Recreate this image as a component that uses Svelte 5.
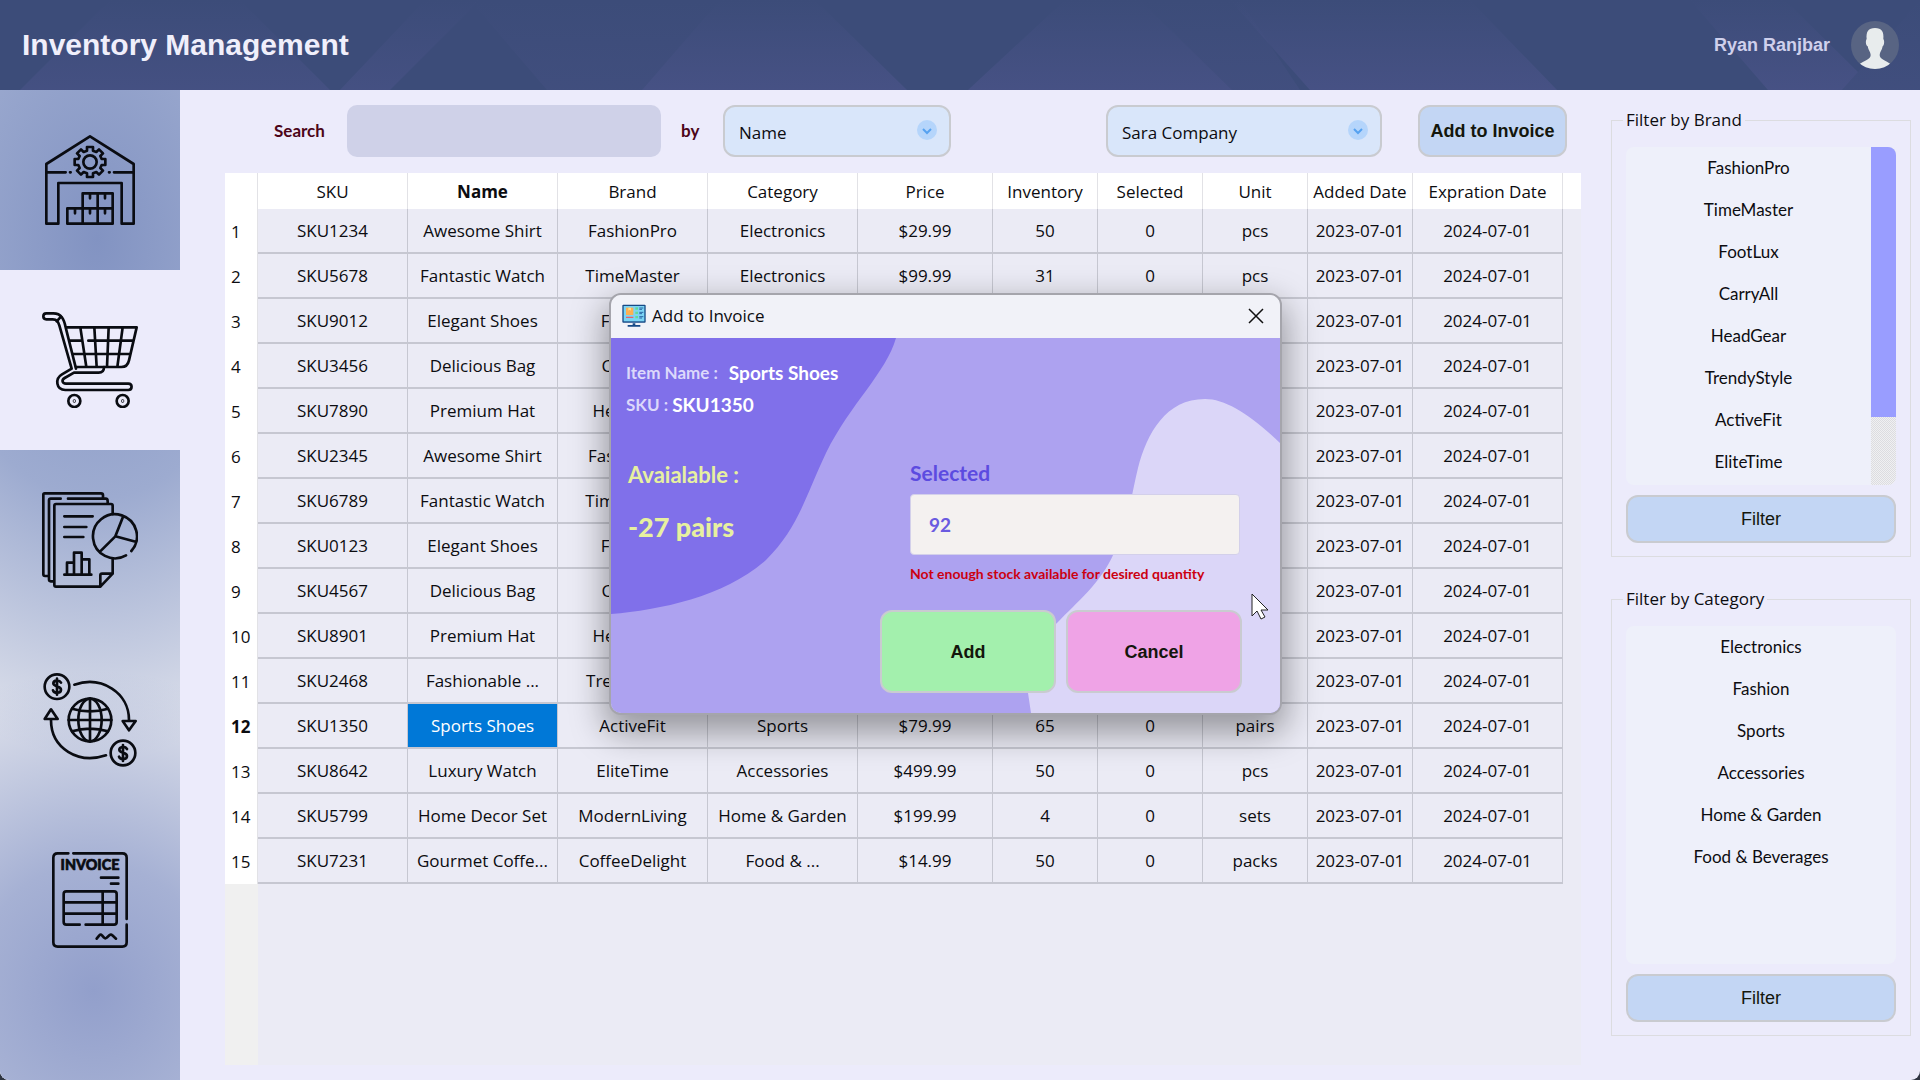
<script>
  const columns = [
    { name: 'SKU', width: 150 },
    { name: 'Name', width: 150 },
    { name: 'Brand', width: 150 },
    { name: 'Category', width: 150 },
    { name: 'Price', width: 135 },
    { name: 'Inventory', width: 105 },
    { name: 'Selected', width: 105 },
    { name: 'Unit', width: 105 },
    { name: 'Added Date', width: 105 },
    { name: 'Expration Date', width: 150 }
  ];

  const items = [
    ['SKU1234', 'Awesome Shirt', 'FashionPro', 'Electronics', '$29.99', '50', 'pcs'],
    ['SKU5678', 'Fantastic Watch', 'TimeMaster', 'Electronics', '$99.99', '31', 'pcs'],
    ['SKU9012', 'Elegant Shoes', 'FootLux', 'Fashion', '$49.99', '50', 'pairs'],
    ['SKU3456', 'Delicious Bag', 'CarryAll', 'Fashion', '$39.99', '50', 'pcs'],
    ['SKU7890', 'Premium Hat', 'HeadGear', 'Fashion', '$19.99', '50', 'pcs'],
    ['SKU2345', 'Awesome Shirt', 'FashionPro', 'Fashion', '$29.99', '50', 'pcs'],
    ['SKU6789', 'Fantastic Watch', 'TimeMaster', 'Electronics', '$99.99', '50', 'pcs'],
    ['SKU0123', 'Elegant Shoes', 'FootLux', 'Fashion', '$49.99', '50', 'pairs'],
    ['SKU4567', 'Delicious Bag', 'CarryAll', 'Fashion', '$39.99', '50', 'pcs'],
    ['SKU8901', 'Premium Hat', 'HeadGear', 'Fashion', '$19.99', '50', 'pcs'],
    ['SKU2468', 'Fashionable ...', 'TrendyStyle', 'Fashion', '$59.99', '50', 'pcs'],
    ['SKU1350', 'Sports Shoes', 'ActiveFit', 'Sports', '$79.99', '65', 'pairs'],
    ['SKU8642', 'Luxury Watch', 'EliteTime', 'Accessories', '$499.99', '50', 'pcs'],
    ['SKU5799', 'Home Decor Set', 'ModernLiving', 'Home & Garden', '$199.99', '4', 'sets'],
    ['SKU7231', 'Gourmet Coffe...', 'CoffeeDelight', 'Food & ...', '$14.99', '50', 'packs']
  ];
  const rows = items.map(([sku, name, brand, category, price, stock, unit]) => [
    sku, name, brand, category, price, stock, '0', unit, '2023-07-01', '2024-07-01'
  ]);

  const brands = ['FashionPro', 'TimeMaster', 'FootLux', 'CarryAll', 'HeadGear', 'TrendyStyle', 'ActiveFit', 'EliteTime'];
  const categories = ['Electronics', 'Fashion', 'Sports', 'Accessories', 'Home & Garden', 'Food & Beverages'];

  const activeRow = 11;
  const activeColumn = 1;
  let search = $state('');
  let quantity = $state('92');
</script>

{#snippet chevron()}
  <svg class="chevron" viewBox="0 0 20 20" aria-hidden="true">
    <circle cx="10" cy="10" r="10" fill="#b5d5fb" />
    <path d="M6 9l4 4 4-4" fill="none" stroke="#56a2f0" stroke-width="2" />
  </svg>
{/snippet}

<div class="app">
  <header class="topbar">
    <svg class="pattern" viewBox="0 0 1920 90" preserveAspectRatio="none" aria-hidden="true">
      <defs>
        <linearGradient id="facet" x1="0" y1="0" x2="0" y2="1">
          <stop offset="0" stop-color="#4a5388" stop-opacity="0" />
          <stop offset="1" stop-color="#4a5388" stop-opacity="0.75" />
        </linearGradient>
      </defs>
      <g fill="url(#facet)">
        <path d="M20 90L110 0H240L330 90Z" opacity="0.8" />
        <path d="M340 90L425 0H480L390 90Z" opacity="0.8" />
        <path d="M547 90L470 0H720L642 90Z" opacity="0.4" />
        <path d="M642 90L720 0H815L907 90Z" />
        <path d="M968 90L1065 0H1140L1232 90Z" />
        <path d="M1232 90L1140 0H1240L1300 90Z" opacity="0.5" />
        <path d="M1310 90L1230 0H1470L1557 90Z" />
        <path d="M1768 90L1690 0H1785L1858 72L1842 90Z" />
        <path d="M1842 90L1858 72L1920 0V90Z" opacity="0.4" />
      </g>
    </svg>
    <h1>Inventory Management</h1>
    <div class="user">
      <span>Ryan Ranjbar</span>
      <svg class="avatar" viewBox="0 0 144 144" role="img" aria-label="Profile picture">
        <defs><clipPath id="disc"><circle cx="72" cy="72" r="72" /></clipPath></defs>
        <circle cx="72" cy="72" r="72" fill="#586483" />
        <path clip-path="url(#disc)" fill="#e8eced" d="M72 21C92 21 99 32 97 54C101 60 100 72 95 76C93 88 86 94 86 102C86 116 104 117 120 130V144H24V130C42 117 59 116 59 102C59 94 52 88 50 76C44 72 43 60 47 54C45 32 52 21 72 21Z" />
      </svg>
    </div>
  </header>

  <div class="body">
    <nav class="sidebar" aria-label="Sections">
      <button type="button" aria-label="Warehouse">
        <svg viewBox="126 96 288 288" class="icon">
          <path d="M139 371V192L270 109L401 192V371H365V249H175V371Z" />
          <path d="M139 217H197M210 217H212M327 217H329M342 217H401" />
          <path d="M202 371V325H338V371ZM248 371V280H338V371M293 280V371M248 325H338M225 327V340M270 327V340M315 327V340M270 282V295M315 282V295" />
          <circle cx="270" cy="186" r="20" />
          <path d="M261 141H279V152L289 156L297 148L309 160L301 168L305 177H316V195H305L301 204L309 212L297 224L289 216L279 220V231H261V220L251 216L243 224L231 212L239 204L235 195H224V177H235L239 168L231 160L243 148L251 156L261 152Z" />
        </svg>
      </button>
      <button type="button" class="current" aria-label="Cart">
        <svg viewBox="126 636 288 288" class="icon cart">
          <path d="M228 806L197 682C192 657 184 640 160 640H139C127 640 127 658 139 658H158C171 658 174 664 178 676L215 806L186 823C164 836 168 870 196 870H385C398 870 398 851 385 851H198C186 851 184 840 194 834L222 818H296C307 818 312 812 312 801" />
          <path d="M200 682H410L387 781C384 795 378 801 364 801H228M241 682L259 801M283 682L290 801M326 682L321 801M368 682L352 801M210 722H243M265 722H401M220 762H391M170 664L183 650" />
          <circle cx="223" cy="903" r="18" /><circle cx="368" cy="903" r="18" />
          <circle cx="223" cy="903" r="1" /><circle cx="368" cy="903" r="1" />
        </svg>
      </button>
      <button type="button" aria-label="Reports">
        <svg viewBox="36 36 288 288" class="icon">
          <path d="M219 54V46Q219 40 213 40H44Q40 40 40 44V283Q40 288 45 288H53M233 70V64Q233 56 227 56H114M92 56H62Q57 56 57 61V298Q57 304 62 304H70M248 102V77Q248 72 243 72H78Q73 72 73 77V315Q73 320 78 320H211L248 281V236M211 320V286Q211 281 216 281H248" />
          <path d="M103 109H188M103 141H169M103 171H160M103 284H184M111 284V248H132M132 284V218H155V284M155 238H178V284" />
          <path d="M304 213A66 66 0 1 0 288 226M280 108L256 169L317 185M256 169L210 215" />
        </svg>
      </button>
      <button type="button" aria-label="Global payments">
        <svg viewBox="36 36 288 288" class="icon">
          <circle cx="180" cy="180" r="64" />
          <ellipse cx="180" cy="180" rx="35" ry="64" />
          <path d="M180 116V244M116 180H244M126 146Q180 162 234 146M126 214Q180 198 234 214" />
          <circle cx="81" cy="80" r="37" /><circle cx="279" cy="279" r="37" />
          <path d="M93 68C88 59 70 60 70 70C70 82 93 77 93 89C93 101 72 101 69 91M81 56V104M291 267C286 258 268 259 268 269C268 281 291 276 291 288C291 300 270 300 267 290M279 255V303" />
          <path d="M133 74C215 46 297 98 297 180M278 183H317L297 211ZM228 286C145 314 63 265 63 180M44 177H83L63 148Z" />
        </svg>
      </button>
      <button type="button" aria-label="Invoices">
        <svg viewBox="36 36 288 288" class="icon">
          <path d="M115 40H83Q70 40 70 53V307Q70 320 83 320H277Q290 320 290 307V254M290 237V53Q290 40 277 40H130" />
          <path d="M213 113H265M243 131H265M149 254H109Q101 254 101 246V162Q101 154 109 154H252Q260 154 260 162V246Q260 254 252 254H167M101 187H260M101 221H260M218 154V254M200 296L208 286Q212 282 216 286L222 293Q226 297 230 293L238 286Q243 282 247 286L258 296" />
          <text x="180" y="90" text-anchor="middle">INVOICE</text>
        </svg>
      </button>
    </nav>

    <main class="main">
      <div class="toolbar">
        <label class="search-label" for="search">Search</label>
        <input id="search" class="search" type="text" bind:value={search} />
        <label class="by-label" for="field">by</label>
        <div class="combo field">
          <select id="field"><option>Name</option><option>SKU</option><option>Brand</option></select>
          {@render chevron()}
        </div>
        <div class="combo customer">
          <select aria-label="Customer"><option>Sara Company</option></select>
          {@render chevron()}
        </div>
        <button type="button" class="soft-button invoice-button">Add to Invoice</button>
      </div>

      <div class="grid-area">
        <table>
          <colgroup>
            <col style:width="33px" />
            {#each columns as column}<col style:width="{column.width}px" />{/each}
            <col />
          </colgroup>
          <thead>
            <tr>
              <td></td>
              {#each columns as column, c}
                <th scope="col" class:strong={c === activeColumn}>{column.name}</th>
              {/each}
              <td></td>
            </tr>
          </thead>
          <tbody>
            {#each rows as row, r}
              <tr>
                <th scope="row" class:strong={r === activeRow}>{r + 1}</th>
                {#each row as cell, c}
                  <td class="cell" class:picked={r === activeRow && c === activeColumn}>{cell}</td>
                {/each}
                <td></td>
              </tr>
            {/each}
          </tbody>
        </table>
      </div>
    </main>

    <aside class="filters">
      <fieldset>
        <legend>Filter by Brand</legend>
        <div class="list">
          <ul>
            {#each brands as brand}<li><button type="button">{brand}</button></li>{/each}
          </ul>
          <div class="scrollbar"><div class="thumb"></div></div>
        </div>
        <button type="button" class="soft-button filter-button">Filter</button>
      </fieldset>
      <fieldset>
        <legend>Filter by Category</legend>
        <div class="list">
          <ul>
            {#each categories as category}<li><button type="button">{category}</button></li>{/each}
          </ul>
        </div>
        <button type="button" class="soft-button filter-button">Filter</button>
      </fieldset>
    </aside>
  </div>

  <div class="dialog" role="dialog" aria-labelledby="dialog-title">
    <div class="titlebar">
      <svg class="app-icon" viewBox="0 0 72 72" aria-hidden="true">
        <rect x="1" y="2" width="70" height="54" rx="3" fill="#174a86" />
        <rect x="5" y="6" width="62" height="46" fill="#7cd4f4" />
        <rect x="12" y="11" width="22" height="22" fill="#fdb052" />
        <path d="M19 11H27V20L23 17L19 20Z" fill="#fde08a" />
        <path d="M12 38H34V42H12Z" fill="#e9606a" />
        <path d="M40 10H48V17H40ZM40 23H48V30H40ZM40 36H48V43H40Z" fill="#5fdc9c" />
        <path d="M52 12H64M52 16H60M52 25H64M52 29H60M52 38H64M52 42H60" stroke="#2b66a5" stroke-width="3" />
        <path d="M32 58H40V63H55V68H17V63H32Z" fill="#174a86" />
      </svg>
      <h2 id="dialog-title">Add to Invoice</h2>
      <button type="button" class="close" aria-label="Close">
        <svg viewBox="0 0 16 16"><path d="M1 1L15 15M15 1L1 15" stroke="#111" stroke-width="1.5" fill="none" /></svg>
      </button>
    </div>
    <div class="sheet">
      <svg class="waves" viewBox="0 0 669 375" preserveAspectRatio="none" aria-hidden="true">
        <path fill="#8070ea" d="M0 0H285C275 35 240 65 215 115C193 162 187 190 155 222C115 258 50 272 0 276Z" />
        <path fill="#dbd6f8" d="M669 105C640 77 615 61 594 61C555 61 536 95 527 130C521 154 518 182 503 215C490 245 465 265 447 284C425 305 415 325 417 355L420 375H669Z" />
      </svg>
      <dl class="facts">
        <div class="name-fact"><dt>Item Name :</dt><dd>Sports Shoes</dd></div>
        <div><dt>SKU :</dt><dd>SKU1350</dd></div>
      </dl>
      <div class="columns">
        <div class="stock">
          <p>Avaialable :</p>
          <strong>-27 pairs</strong>
        </div>
        <form>
          <label for="quantity">Selected</label>
          <input id="quantity" type="text" bind:value={quantity} />
          <p class="error">Not enough stock available for desired quantity</p>
          <div class="actions">
            <button type="button" class="add">Add</button>
            <button type="button" class="cancel">Cancel</button>
          </div>
        </form>
      </div>
    </div>
  </div>

  <svg class="pointer" viewBox="0 0 18 27" aria-hidden="true">
    <path d="M1 1V23L6 18L10 26L14 24L10 17H17Z" fill="#fff" stroke="#222" stroke-width="1" />
  </svg>
</div>

<style>
  :global(body) {
    margin: 0;
    background: #2e3440;
  }
  .app, .app :global(*) {
    box-sizing: border-box;
  }
  .app {
    position: relative;
    display: flex;
    flex-direction: column;
    min-height: 100vh;
    overflow: hidden;
    border-radius: 0 0 9px 9px;
    background: #ecebfb;
    color: #0c0c10;
    font: 17px/24px "Open Sans", "Noto Sans", sans-serif;
  }
  button, input, select {
    margin: 0;
    padding: 0;
    border: 0;
    background: none;
    color: inherit;
    font: inherit;
  }
  h1, h2, p, dl, dd, ul {
    margin: 0;
    padding: 0;
  }

  .topbar {
    position: relative;
    display: flex;
    align-items: center;
    justify-content: space-between;
    height: 90px;
    padding: 0 21px 0 22px;
    background: #3c4c79;
    font-family: "Liberation Sans", Arial, sans-serif;
  }
  .pattern {
    position: absolute;
    inset: 0;
    width: 100%;
    height: 100%;
  }
  h1 {
    position: relative;
    color: #f0effb;
    font-size: 30px;
    line-height: 36px;
  }
  .user {
    position: relative;
    display: flex;
    align-items: center;
    gap: 21px;
    color: #cfd0ec;
    font-size: 18px;
    font-weight: 700;
  }
  .avatar {
    width: 48px;
    height: 48px;
  }

  .body {
    display: flex;
    flex: 1;
  }
  .sidebar {
    display: flex;
    flex-direction: column;
    width: 180px;
    background:
      radial-gradient(ellipse 300px 320px at 52% 91%, #929fcb 0%, #a6b1d4 40%, rgba(223, 226, 236, 0) 100%),
      radial-gradient(ellipse 340px 520px at 54% 15%, #8293c2 0%, #9dabd0 50%, rgba(223, 226, 236, 0) 100%),
      #dfe2ec;
  }
  .sidebar button {
    display: flex;
    align-items: center;
    justify-content: center;
    height: 180px;
  }
  .sidebar .current {
    background: #ecebfb;
  }
  .icon {
    width: 96px;
    height: 96px;
    fill: none;
    stroke: #0a0c12;
    stroke-width: 8;
    stroke-linejoin: round;
    stroke-linecap: round;
  }
  .icon text {
    fill: #0a0c12;
    stroke: #0a0c12;
    stroke-width: 2;
    font: 900 43px Lato, sans-serif;
  }

  .main {
    display: flex;
    flex: 1;
    flex-direction: column;
    min-width: 0;
    padding: 15px 30px 15px 45px;
  }
  .toolbar {
    display: flex;
    align-items: center;
    height: 52px;
    margin-bottom: 16px;
    padding: 0 14px 0 49px;
  }
  .search-label, .by-label {
    color: #4c0518;
    font: 700 17px/24px Lato, sans-serif;
  }
  .search-label {
    width: 73px;
  }
  .search {
    flex: 0 1 314px;
    min-width: 0;
    height: 52px;
    padding: 0 16px;
    border-radius: 10px;
    background: #cfd1e8;
  }
  .by-label {
    width: 62px;
    padding-left: 20px;
  }
  .combo {
    position: relative;
    height: 52px;
  }
  .field {
    width: 228px;
  }
  .customer {
    width: 276px;
    margin: 0 36px 0 auto;
  }
  .combo select {
    width: 100%;
    height: 100%;
    padding: 4px 40px 0 14px;
    border: 2px solid #c9cbd0;
    border-radius: 12px;
    background: #d9e6fa;
    appearance: none;
  }
  .chevron {
    position: absolute;
    top: 15px;
    right: 14px;
    width: 20px;
    height: 20px;
    pointer-events: none;
  }
  .soft-button {
    border: 2px solid #c9cbd0;
    border-radius: 12px;
    background: #c3d6f4;
    color: #14160c;
    font: 18px/24px "Liberation Sans", Arial, sans-serif;
  }
  .invoice-button {
    width: 149px;
    height: 52px;
    font-weight: 700;
    white-space: nowrap;
  }

  .grid-area {
    flex: 1;
    background: linear-gradient(to right, #f0f0f0 33px, #ebebf5 33px);
  }
  table {
    width: 100%;
    border-collapse: separate;
    border-spacing: 0;
    table-layout: fixed;
  }
  th, td {
    overflow: hidden;
    padding: 0;
    font-weight: 400;
    text-align: center;
    white-space: nowrap;
  }
  thead td, thead th {
    height: 36px;
    padding-top: 2px;
    border-right: 1px solid #e2e2e6;
    background: #fff;
  }
  thead td:last-child {
    border-right: 0;
  }
  tbody th {
    height: 45px;
    padding-left: 6px;
    border-right: 1px solid #e2e2e6;
    background: #fff;
    text-align: left;
  }
  .cell {
    height: 45px;
    border-right: 1px solid #c6c7d1;
    border-bottom: 2px solid #c6c7d1;
  }
  .strong {
    font-weight: 700;
  }
  .picked {
    background: #0078d7;
    background-clip: padding-box;
    color: #fff;
  }

  .filters {
    display: flex;
    flex-direction: column;
    gap: 30px;
    width: 309px;
    padding: 18px 9px 44px 0;
  }
  fieldset {
    display: block;
    min-width: 0;
    margin: 0;
    padding: 15px 14px 13px;
    border: 1px solid #dcdce0;
  }
  legend {
    margin-left: -3px;
    padding: 0 3px;
  }
  .list {
    display: flex;
    height: 338px;
    margin-bottom: 10px;
    overflow: hidden;
    border-radius: 8px;
    background: #eef0fa;
  }
  ul {
    flex: 1;
    list-style: none;
  }
  li button {
    width: 100%;
    height: 42px;
    font: 17px/24px Lato, sans-serif;
  }
  .scrollbar {
    width: 25px;
    background: repeating-conic-gradient(#f0f0f2 0 25%, #dcdce0 0 50%) 0 0 / 2px 2px;
  }
  .thumb {
    height: 80%;
    background: #999dff;
  }
  .filter-button {
    display: block;
    width: 100%;
    height: 48px;
  }

  .dialog {
    position: absolute;
    top: 295px;
    left: 611px;
    width: 669px;
    overflow: hidden;
    border-radius: 10px;
    box-shadow: 0 0 0 2px #a5a5ac, 0 14px 34px 6px rgba(0, 0, 0, 0.36);
  }
  .titlebar {
    display: flex;
    align-items: center;
    height: 43px;
    padding: 0 16px 2px 11px;
    background: #f1f2f8;
  }
  .app-icon {
    width: 24px;
    height: 24px;
    margin-right: 6px;
  }
  h2 {
    flex: 1;
    font-size: 17px;
    font-weight: 400;
  }
  .close {
    width: 16px;
    height: 16px;
  }
  .close svg {
    display: block;
  }
  .sheet {
    position: relative;
    padding: 19px 38px 20px 15px;
    background: #ada2f0;
    font-family: Lato, sans-serif;
    font-weight: 700;
  }
  .waves {
    position: absolute;
    inset: 0;
    width: 100%;
    height: 100%;
  }
  .facts, .columns {
    position: relative;
  }
  .facts div {
    display: flex;
    align-items: center;
    gap: 4px;
    height: 32px;
  }
  .facts .name-fact {
    gap: 11px;
  }
  dt {
    color: #dcd8fb;
    font-size: 17px;
  }
  dd {
    color: #fff;
    font-size: 19px;
  }
  .columns {
    display: flex;
    justify-content: space-between;
    padding-top: 38px;
  }
  .stock {
    padding-left: 2px;
    color: #e7f0a0;
  }
  .stock p {
    font-size: 22px;
    line-height: 32px;
  }
  .stock strong {
    display: block;
    padding-top: 18px;
    font-size: 27px;
    line-height: 36px;
  }
  form {
    display: flex;
    flex-direction: column;
    width: 362px;
  }
  form label {
    margin: 0 0 7px 30px;
    color: #5c4be0;
    font-size: 21px;
    line-height: 28px;
  }
  form input {
    height: 61px;
    margin: 0 2px 9px 30px;
    padding: 0 18px;
    border: 1px solid #d3d0ea;
    border-radius: 4px;
    background: #f4f1f0;
    color: #6a5ae0;
    font-size: 19px;
  }
  .error {
    margin: 0 0 26px 30px;
    color: #cc0010;
    font-size: 14px;
    line-height: 20px;
    white-space: nowrap;
  }
  .actions {
    display: flex;
    gap: 10px;
  }
  .actions button {
    flex: 1;
    height: 83px;
    border: 2px solid #c9cbd0;
    border-radius: 12px;
    color: #14160c;
    font: 700 18px/24px "Liberation Sans", Arial, sans-serif;
  }
  .actions .add {
    background: #a3f0ad;
  }
  .actions .cancel {
    background: #efa3e6;
  }
  .pointer {
    position: absolute;
    top: 593px;
    left: 1251px;
    width: 18px;
    height: 27px;
  }
</style>
